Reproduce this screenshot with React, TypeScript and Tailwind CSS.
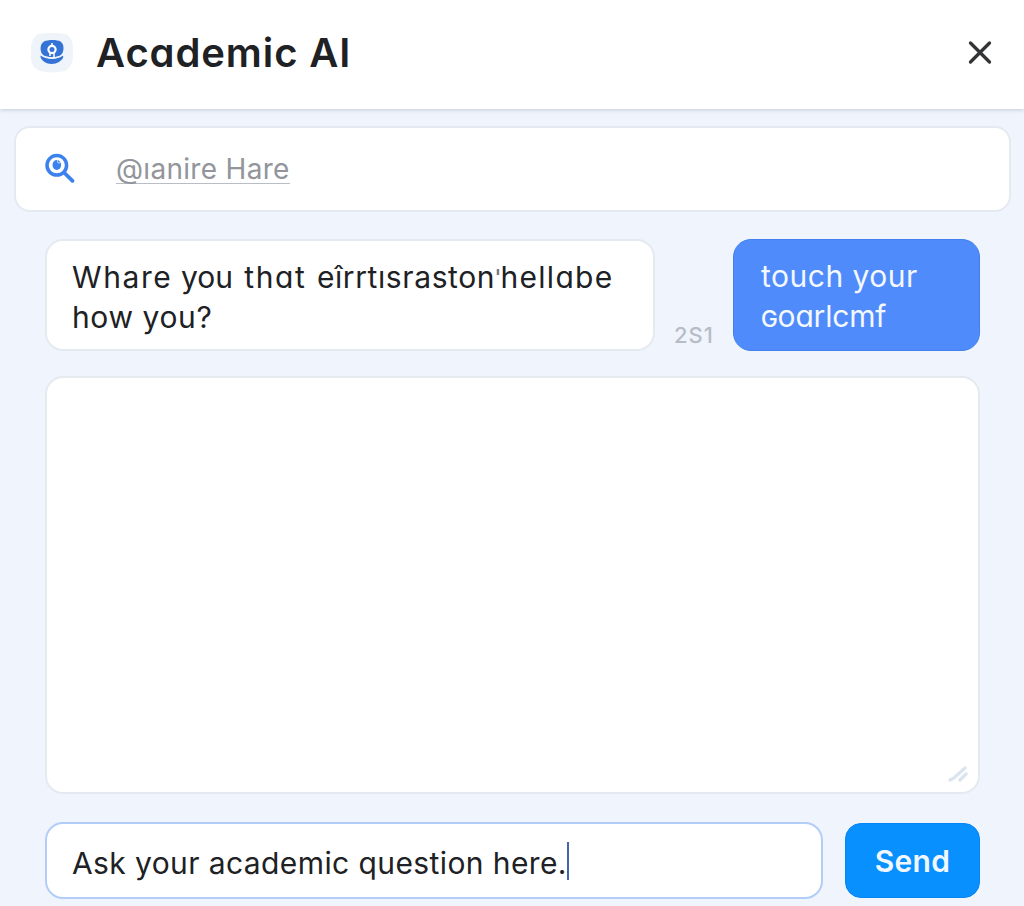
import { useState } from "react"

type Part = {
  text: string
  className?: string
}

type MessageProps = {
  lines: Part[][]
  className?: string
}

const received: Part[][] = [
  [
    { text: "Whare", className: "tracking-[1.6px]" },
    { text: " you " },
    { text: "thɑt", className: "ml-[3px] tracking-[1.6px]" },
    { text: " " },
    { text: "eîrrtısraston", className: "ml-0.5 tracking-[0.6px]" },
    { text: "ˈ", className: "relative top-1 text-[#77797d]" },
    { text: "hellɑbe", className: "tracking-[1.3px]" },
  ],
  [{ text: "how you?", className: "tracking-[0.6px]" }],
]

const sent: Part[][] = [
  [{ text: "touch your", className: "tracking-[0.5px]" }],
  [{ text: "ɢoɑrlcmf", className: "tracking-[-0.2px]" }],
]

function Logo() {
  return (
    <svg width="44" height="42" viewBox="0 0 44 42" fill="none">
      <path
        d="M8 2Q22 0 36 2Q42 5 43 14V26Q42 35 35 39Q22 42 10 39Q2 36 1 27V14Q3 5 8 2Z"
        fill="#eff4fa"
      />
      <path
        d="M13.500 23.500C9.500 20 9.500 12 14 9.500C18 7.500 27 7.500 30.500 9.500C34.500 12 34.500 20 30.500 23.500C26 25.500 18 25.500 13.500 23.500Z"
        fill="#3573d6"
      />
      <path
        d="M10.500 23.500C17 28 27 28 33 23.500C34 26 31.500 28 29 30C25 32.500 18 32.500 14.500 30C12 28 10 26 10.500 23.500Z"
        fill="#3573d6"
      />
      <path d="M11 22.500C17 27 27 27 33 22.500" stroke="#eff4fa" strokeWidth="1.300" />
      <circle cx="22" cy="17.500" r="3.600" stroke="white" strokeWidth="2.200" />
      <path d="M22 11V14M20 21V24M24 21V26" stroke="white" strokeWidth="1.500" />
    </svg>
  )
}

function SearchIcon() {
  return (
    <svg width="32" height="32" viewBox="0 0 32 32" fill="none">
      <circle cx="12.800" cy="12.300" r="9.800" stroke="#3c82ee" strokeWidth="3.500" />
      <path d="M20.500 20L28.500 27.800" stroke="#3c82ee" strokeWidth="3.800" strokeLinecap="round" />
      <ellipse cx="12.800" cy="12" rx="4.300" ry="5" fill="#3c82ee" />
      <path d="M13.300 7L14 10L16.500 9.500" stroke="#c5daf9" strokeWidth="1" />
    </svg>
  )
}

function Message({ lines, className }: MessageProps) {
  return (
    <div className={`h-28 rounded-[18px] pt-4 text-[30px] leading-10 ${className}`}>
      {lines.map((parts, i) => (
        <p key={i} className="whitespace-pre">
          {parts.map((part, j) => (
            <span key={j} className={part.className}>
              {part.text}
            </span>
          ))}
        </p>
      ))}
    </div>
  )
}

export default function App() {
  const [question] = useState("Ask your academic question here.")

  return (
    <div className="flex h-[906px] w-full flex-col overflow-hidden bg-[#f0f5fd] font-['Inter',sans-serif] text-[#202124]">
      {/* Header */}
      <header className="flex h-[109px] shrink-0 items-center bg-white pb-1 pl-[30px] pr-[31px] shadow-[0_1px_4px_rgba(80,90,120,0.28)]">
        <Logo />
        <h1 className="ml-[22px] text-[40px] font-semibold leading-none tracking-[0.9px] [font-feature-settings:'cv11']">
          Academic AI
        </h1>
        <button type="button" aria-label="Close" className="ml-auto">
          <svg width="26" height="26" viewBox="0 0 26 26" fill="none">
            <path d="M3.500 3L22.500 22M22.500 3L3.500 22" stroke="#333435" strokeWidth="3.300" strokeLinecap="round" />
          </svg>
        </button>
      </header>

      {/* Search */}
      <div className="ml-3.5 mr-[13px] mt-[17px] flex h-[86px] shrink-0 items-center rounded-2xl border-2 border-[#e5e9f0] bg-white pl-7">
        <SearchIcon />
        <span className="ml-[40px] border-b border-[#b9bec6] pt-0.5 text-[28px] leading-[27px] tracking-[0.3px] text-[#92959b]">
          @ıanire Hare
        </span>
      </div>

      <main className="flex flex-col pl-[45px] pr-11 pt-[27px]">
        {/* Messages */}
        <div className="flex items-end">
          <Message lines={received} className="w-[610px] border-2 border-[#e5eaf1] bg-white px-[25px]" />
          <span className="mb-1 ml-[19px] w-[59px] text-[22px] font-medium leading-6 tracking-[1px] text-[#b7bcc5]">
            2S1
          </span>
          <Message lines={sent} className="w-[247px] border border-[#4281ed] bg-[#4f8bfb] px-[27px] text-[#f4f8ff]" />
        </div>

        <div className="mt-[25px] flex h-[418px] items-end justify-end rounded-[18px] border-2 border-[#e5eaf1] bg-white pb-[9px] pr-2.5">
          <svg width="20" height="18" viewBox="0 0 20 18" fill="none">
            <path d="M2 15L6 13L17 3M12 15L18 9" stroke="#dce4ef" strokeWidth="3.300" strokeLinecap="round" />
          </svg>
        </div>

        {/* Question */}
        <div className="mt-7 flex">
          <div className="flex h-[77px] w-[778px] items-center rounded-[18px] border-2 border-[#b2cdf7] bg-white pl-[25px]">
            <span className="whitespace-nowrap pt-1 text-[30px] leading-10 tracking-[0.4px]">{question}</span>
            <span className="h-[38px] w-0.5 bg-[#4564a5]" />
          </div>
          <button
            type="button"
            className="ml-[22px] mt-px h-[75px] w-[135px] rounded-2xl border border-[#0785f3] bg-[#0890ff] pt-0.5 text-[30px] font-semibold tracking-[0.3px] text-[#f1f7ff]"
          >
            Send
          </button>
        </div>
      </main>
    </div>
  )
}
